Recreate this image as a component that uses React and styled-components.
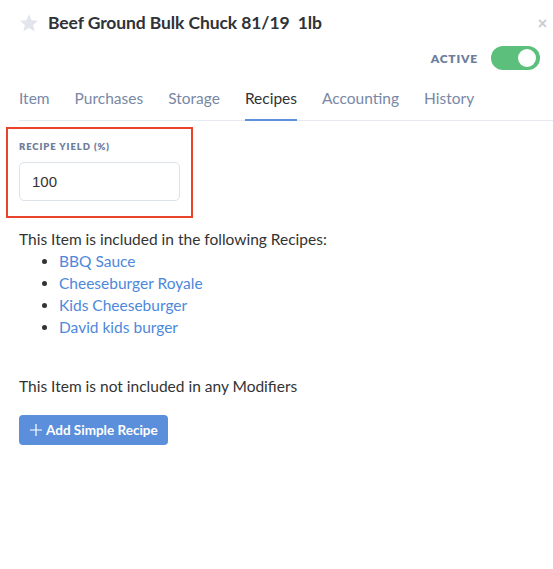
import React, { useState } from "react";
import styled, { createGlobalStyle } from "styled-components";

const GlobalStyle = createGlobalStyle`
  body {
    margin: 0;
    background: #ffffff;
    font-family: "Lato", "Noto Sans", sans-serif;
    color: #333;
  }
`;

// 패널 전체
const Panel = styled.div`
  width: 553px;
  height: 569px;
  box-sizing: border-box;
  padding: 0 0 0 19px;
  background: #fff;
`;

const Header = styled.div`
  display: flex;
  align-items: center;
  height: 45px;
  padding-right: 6px;
`;

const Star = styled.svg`
  width: 20px;
  height: 20px;
  margin-right: 9px;
  flex-shrink: 0;
`;

const Title = styled.h1`
  margin: 0;
  font-size: 17.5px;
  font-weight: 700;
  color: #2f3237;
  letter-spacing: -0.1px;
  white-space: pre;
  flex: 1;
`;

const CloseButton = styled.button`
  background: none;
  border: none;
  padding: 0;
  color: #c9ced6;
  font-size: 16px;
  font-weight: 700;
  line-height: 1;
  cursor: pointer;
  margin-top: 2px;
`;

const StatusRow = styled.div`
  display: flex;
  justify-content: flex-end;
  align-items: center;
  gap: 13px;
  padding-right: 13px;
  height: 26px;
`;

const StatusLabel = styled.span`
  font-size: 12px;
  font-weight: 800;
  letter-spacing: 0.8px;
  color: #6d7d9b;
`;

const Toggle = styled.button`
  position: relative;
  width: 49px;
  height: 24px;
  border-radius: 12px;
  border: none;
  padding: 0;
  background: ${(p) => (p.$on ? "#5cbf7c" : "#cfd5de")};
  cursor: pointer;

  &::after {
    content: "";
    position: absolute;
    top: 3px;
    left: ${(p) => (p.$on ? "27px" : "3px")};
    width: 18px;
    height: 18px;
    border-radius: 50%;
    background: #fff;
  }
`;

const Tabs = styled.div`
  display: flex;
  gap: 25px;
  border-bottom: 1px solid #e6e9ef;
  margin-top: 18px;
`;

const Tab = styled.div`
  font-size: 15.5px;
  line-height: 18px;
  padding: 0 0 12px;
  color: ${(p) => (p.$active ? "#2f3237" : "#7888a5")};
  border-bottom: 2px solid ${(p) => (p.$active ? "#5b8fd9" : "transparent")};
  margin-bottom: -1px;
  cursor: pointer;
`;

const YieldBox = styled.div`
  margin: 6px 0 0 -13px;
  width: 187px;
  box-sizing: border-box;
  border: 2px solid #e9442b;
  padding: 12px 10px 15px 11px;
`;

const FieldLabel = styled.div`
  font-size: 9.5px;
  font-weight: 800;
  letter-spacing: 0.9px;
  color: #6d7d9b;
  text-transform: uppercase;
  margin-bottom: 10px;
`;

const YieldInput = styled.input`
  display: block;
  width: 161px;
  height: 39px;
  box-sizing: border-box;
  border: 1px solid #dce2ea;
  border-radius: 5px;
  padding: 0 12px;
  font-family: "Liberation Sans", sans-serif;
  font-size: 15px;
  color: #333;
  outline: none;
`;

const Text = styled.p`
  margin: ${(p) => p.$margin || "0"};
  font-size: 15.5px;
  color: #333;
`;

const RecipeList = styled.ul`
  margin: 2px 0 0;
  padding-left: 40px;
  list-style: disc;
`;

const RecipeItem = styled.li`
  font-size: 15.5px;
  line-height: 22px;
  color: #333;

  a {
    color: #4d88db;
    text-decoration: none;
  }
`;

const AddButton = styled.button`
  display: inline-flex;
  align-items: center;
  gap: 4px;
  margin-top: 20px;
  height: 30px;
  padding: 0 10px 0 11px;
  background: #5b8fdb;
  color: #fff;
  border: none;
  border-radius: 4px;
  font-family: inherit;
  font-size: 13.5px;
  font-weight: 700;
  cursor: pointer;
`;

const recipes = [
  "BBQ Sauce",
  "Cheeseburger Royale",
  "Kids Cheeseburger",
  "David kids burger",
];

const tabs = ["Item", "Purchases", "Storage", "Recipes", "Accounting", "History"];

export default function App() {
  const [active, setActive] = useState(true);
  const [tab, setTab] = useState("Recipes");
  const [yieldValue, setYieldValue] = useState("100");

  return (
    <>
      <GlobalStyle />
      <Panel>
        <Header>
          <Star viewBox="0 0 24 24">
            <path
              d="M12 1.5l3.1 7.1 7.7.7-5.8 5.1 1.7 7.6L12 18l-6.7 4 1.7-7.6-5.8-5.1 7.7-.7z"
              fill="#e2e6ec"
            />
          </Star>
          <Title>{"Beef Ground Bulk Chuck 81/19  1lb"}</Title>
          <CloseButton>×</CloseButton>
        </Header>

        <StatusRow>
          <StatusLabel>ACTIVE</StatusLabel>
          <Toggle $on={active} onClick={() => setActive(!active)} />
        </StatusRow>

        <Tabs>
          {tabs.map((t) => (
            <Tab key={t} $active={tab === t} onClick={() => setTab(t)}>
              {t}
            </Tab>
          ))}
        </Tabs>

        <YieldBox>
          <FieldLabel>Recipe Yield (%)</FieldLabel>
          <YieldInput
            value={yieldValue}
            onChange={(e) => setYieldValue(e.target.value)}
          />
        </YieldBox>

        <Text $margin="12px 0 0">This Item is included in the following Recipes:</Text>
        <RecipeList>
          {recipes.map((r) => (
            <RecipeItem key={r}>
              <a href="#">{r}</a>
            </RecipeItem>
          ))}
        </RecipeList>

        <Text $margin="39px 0 0">This Item is not included in any Modifiers</Text>

        <AddButton>
          <svg width="12" height="12" viewBox="0 0 12 12">
            <path d="M6 0v12M0 6h12" stroke="#fff" strokeWidth="1.2" />
          </svg>
          Add Simple Recipe
        </AddButton>
      </Panel>
    </>
  );
}
